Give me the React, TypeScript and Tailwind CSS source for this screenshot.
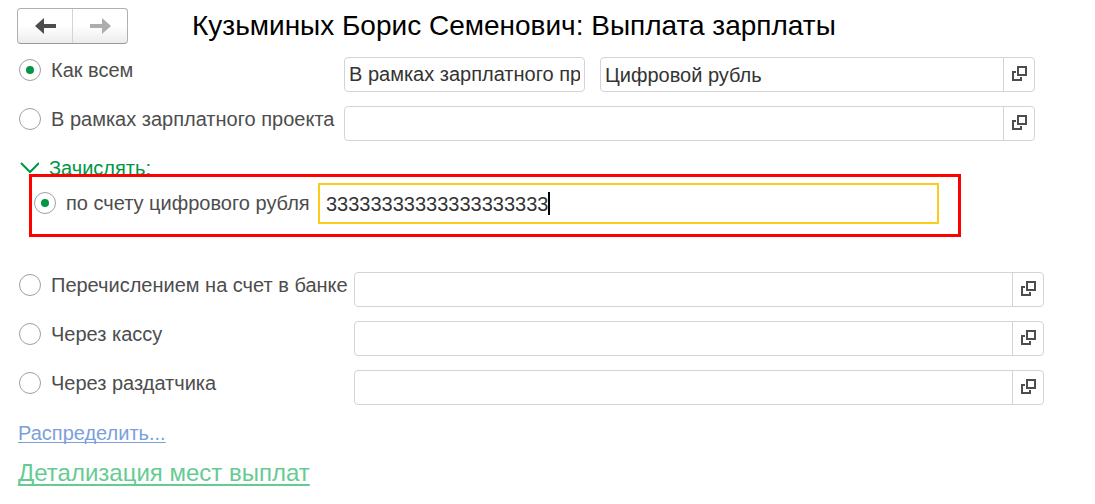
import { useState } from "react";
import type { ReactNode } from "react";

const fontStack = "font-['Liberation_Sans',Arial,sans-serif]";

function OpenIcon() {
  return (
    <svg width="15" height="15" viewBox="0 0 15 15" fill="none" stroke="#4d4d4d" strokeWidth="2">
      <rect x="6" y="1" width="8" height="8" />
      <path d="M4 6H1v8h8v-3" />
    </svg>
  );
}

function ArrowIcon({ className = "" }: { className?: string }) {
  return (
    <svg width="21" height="16" viewBox="0 0 21 16" fill="currentColor" className={className}>
      <path d="M0 8 9 0v6h12v4H9v6z" />
    </svg>
  );
}

type LookupFieldProps = {
  label: string;
  value: string;
  onChange: (value: string) => void;
};

function LookupField({ label, value, onChange }: LookupFieldProps) {
  return (
    <div className="flex h-[35px] min-w-0 flex-1 rounded border border-[#d4d4d4] bg-white">
      <input
        type="text"
        aria-label={label}
        value={value}
        onChange={(e) => onChange(e.target.value)}
        className="min-w-0 flex-1 px-1 text-[#333] outline-none"
      />
      <button
        type="button"
        aria-label={`Открыть: ${label}`}
        className="flex w-[31px] shrink-0 items-start border-l border-[#d4d4d4] pt-2 pl-2"
      >
        <OpenIcon />
      </button>
    </div>
  );
}

type OptionProps = {
  id: string;
  selected: boolean;
  onSelect: () => void;
  name: string;
  children: ReactNode;
};

function Option({ id, selected, onSelect, name, children }: OptionProps) {
  return (
    <label className="flex h-[26px] items-center gap-2.5 whitespace-nowrap text-[#4d4d4d]">
      <input
        type="radio"
        name={name}
        value={id}
        checked={selected}
        onChange={onSelect}
        className="grid size-[22px] shrink-0 appearance-none place-items-center rounded-full border border-[#a0a0a0] bg-white checked:before:size-2 checked:before:rounded-full checked:before:bg-[#009646] checked:before:content-['']"
      />
      {children}
    </label>
  );
}

const otherMethods = [
  { id: "bank", label: "Перечислением на счет в банке" },
  { id: "cash", label: "Через кассу" },
  { id: "agent", label: "Через раздатчика" },
];

export default function App() {
  const [method, setMethod] = useState("common");
  const [target, setTarget] = useState("digital");
  const [account, setAccount] = useState("33333333333333333333");
  const [values, setValues] = useState<Record<string, string>>({
    commonType: "В рамках зарплатного проекта",
    commonPlace: "Цифровой рубль",
  });

  const setValue = (key: string) => (value: string) => setValues({ ...values, [key]: value });

  return (
    <main className={`${fontStack} bg-white pt-2 text-[20px] leading-6`}>
      <header className="flex items-center pl-[17px]">
        <div className="flex h-9 w-[111px] shrink-0 rounded border border-[#b0b0b0] border-b-[#999] bg-linear-to-b from-white from-50% to-[#ececec]">
          <button type="button" aria-label="Назад" className="flex flex-1 items-center justify-center border-r border-[#d4d4d4] text-[#4d4d4d]">
            <ArrowIcon />
          </button>
          <button type="button" aria-label="Вперед" className="flex flex-1 items-center justify-center text-[#adadad]">
            <ArrowIcon className="rotate-180" />
          </button>
        </div>
        <h1 className="ml-16 whitespace-nowrap text-[28px] leading-8 text-black">
          Кузьминых Борис Семенович: Выплата зарплаты
        </h1>
      </header>

      <form className="mt-[13px] pl-[19px]">
        <div className="flex flex-col gap-3.5 pr-[60px]">
          <div className="flex">
            <div className="w-[325px] shrink-0">
              <Option id="common" name="method" selected={method === "common"} onSelect={() => setMethod("common")}>
                Как всем
              </Option>
            </div>
            <input
              type="text"
              aria-label="Способ выплаты"
              value={values.commonType}
              onChange={(e) => setValue("commonType")(e.target.value)}
              className="mr-[15px] h-[35px] w-[241px] rounded border border-[#d4d4d4] px-1 text-[#333] outline-none"
            />
            <LookupField label="Место выплаты" value={values.commonPlace} onChange={setValue("commonPlace")} />
          </div>
          <div className="flex">
            <div className="w-[325px] shrink-0">
              <Option id="project" name="method" selected={method === "project"} onSelect={() => setMethod("project")}>
                В рамках зарплатного проекта
              </Option>
            </div>
            <LookupField label="Зарплатный проект" value={values.project ?? ""} onChange={setValue("project")} />
          </div>
        </div>

        <button type="button" className="mt-[15px] flex h-6 items-center gap-2.5 text-[#009646]">
          <svg width="20" height="12" viewBox="0 0 20 12" fill="none" stroke="currentColor" strokeWidth="2">
            <path d="m2 1 9 9 9-9" />
          </svg>
          Зачислять:
        </button>

        {/* Highlighted block, its frame overlaps the group title */}
        <div className="relative -mt-1.5 mr-[134px] ml-2.5 flex h-[63px] items-start border-3 border-[#ff0000] bg-white pt-1.5 pr-[19px] pl-0.5">
          <div className="w-[284px] shrink-0 pt-[7px]">
            <Option id="digital" name="target" selected={target === "digital"} onSelect={() => setTarget("digital")}>
              по счету цифрового рубля
            </Option>
          </div>
          <div className="flex h-[41px] min-w-0 flex-1 items-center border-2 border-[#fbca1d] pl-1.5">
            <input
              type="text"
              aria-label="Счет цифрового рубля"
              value={account}
              onChange={(e) => setAccount(e.target.value)}
              className="field-sizing-content min-w-0 text-[#333] caret-transparent outline-none"
            />
            <span className="h-[23px] w-0.5 shrink-0 bg-black" />
          </div>
        </div>

        <div className="mt-[35px] flex flex-col gap-3.5 pr-[51px]">
          {otherMethods.map((m) => (
            <div key={m.id} className="flex">
              <div className="w-[335px] shrink-0">
                <Option id={m.id} name="method" selected={method === m.id} onSelect={() => setMethod(m.id)}>
                  {m.label}
                </Option>
              </div>
              <LookupField label={m.label} value={values[m.id] ?? ""} onChange={setValue(m.id)} />
            </div>
          ))}
        </div>
      </form>

      <nav className="mt-4 flex flex-col items-start gap-3 pl-[18px]">
        <a href="#distribute" className="text-[#7c9fdb] underline decoration-1 underline-offset-2 [text-decoration-skip-ink:none]">
          Распределить...
        </a>
        <a href="#details" className="text-[24px] leading-8 text-[#66cb93] underline decoration-2 underline-offset-3 [text-decoration-skip-ink:none]">
          Детализация мест выплат
        </a>
      </nav>
    </main>
  );
}
